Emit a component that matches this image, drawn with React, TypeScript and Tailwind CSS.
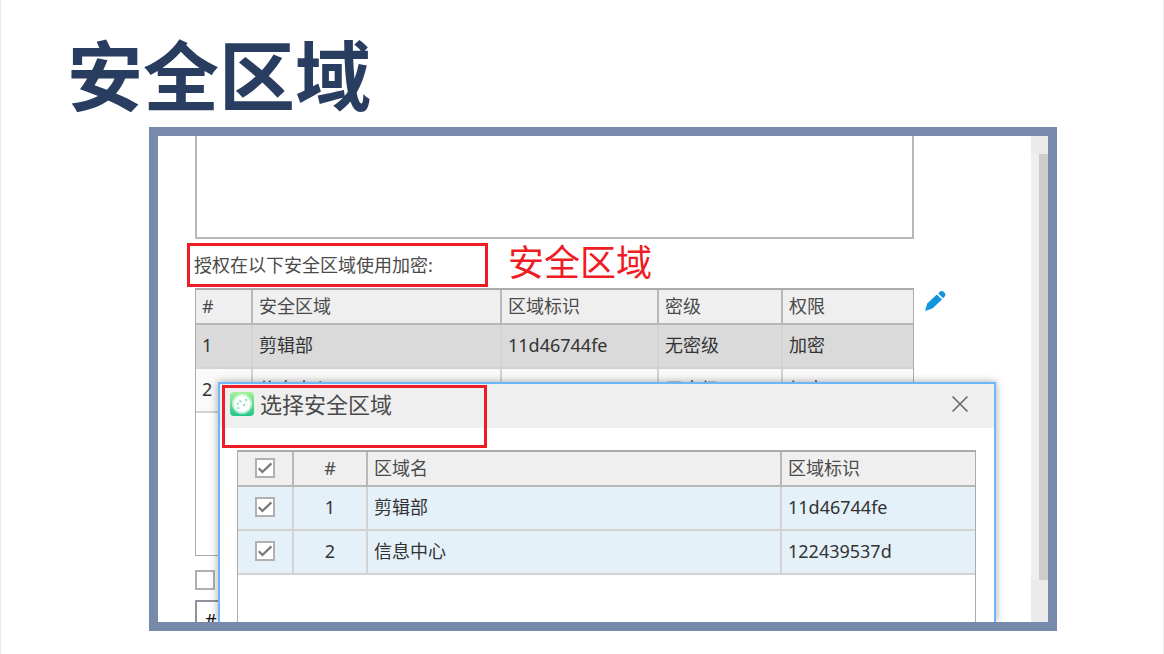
import { useState } from 'react'
import { clsx } from 'clsx'

// ── Types ─────────────────────────────────────────────────────────────────────

interface Zone {
  id: number
  name: string
  code: string
  level: string
  permission: string
}

// ── Data ──────────────────────────────────────────────────────────────────────

const ZONES: Zone[] = [
  { id: 1, name: '剪辑部',   code: '11d46744fe', level: '无密级', permission: '加密' },
  { id: 2, name: '信息中心', code: '122439537d', level: '无密级', permission: '加密' },
]

const HEAD_CELL = 'border-r-2 border-b-2 border-[#b8b8b8] last:border-r-0 px-1.5 pb-0.5 font-normal'
const BODY_CELL = 'border-r-2 border-b-2 border-[#d3d3d3] last:border-r-0 px-1.5 pb-0.5'

// ── Small parts ───────────────────────────────────────────────────────────────

function TickBox({ label, checked, onChange }: {
  label: string
  checked: boolean
  onChange: (value: boolean) => void
}) {
  return (
    <label className="mx-auto grid size-5">
      <input
        type="checkbox"
        aria-label={label}
        checked={checked}
        onChange={e => onChange(e.target.checked)}
        className="col-start-1 row-start-1 size-5 appearance-none border-2 border-[#b0b0b0] bg-white"
      />
      {checked && (
        <svg viewBox="0 0 20 20" className="pointer-events-none col-start-1 row-start-1 size-5" fill="none" stroke="#777" strokeWidth="2.2">
          <path d="M3.8 10.2 L7.4 14 L16.4 5.4" />
        </svg>
      )}
    </label>
  )
}

function PencilIcon() {
  return (
    <svg viewBox="0 0 22 22" className="size-[22px]" fill="#1296db">
      <path d="M1 21 L3.2 13.6 L12.8 4.5 L18 9.5 L8.4 18.6 Z" />
      <path d="M14.2 3.4 L16.2 1.5 Q17.5 0.4 18.9 1.3 L21 3.3 Q22 4.7 21 6.1 L19.2 8.2 Z" />
    </svg>
  )
}

function AppLogo() {
  return (
    <svg viewBox="0 0 24 24" className="size-6 shrink-0">
      <defs>
        <linearGradient id="logo-bg" x1="0" y1="0" x2="0" y2="1">
          <stop offset="0" stopColor="#a5f29a" />
          <stop offset="1" stopColor="#1fc68a" />
        </linearGradient>
        <radialGradient id="logo-disc">
          <stop offset="0.7" stopColor="#fff" />
          <stop offset="1" stopColor="#fff" stopOpacity="0.3" />
        </radialGradient>
      </defs>
      <rect width="24" height="24" rx="4" fill="url(#logo-bg)" />
      <circle cx="12" cy="12" r="10.4" fill="url(#logo-disc)" />
      <g fill="#5fd0a8">
        <circle cx="7.8" cy="11.6" r="0.9" />
        <circle cx="10.2" cy="9.2" r="1" />
        <circle cx="16.2" cy="8" r="0.9" />
        <circle cx="14" cy="13" r="1.1" />
        <circle cx="8.4" cy="16" r="1" />
      </g>
      <path d="M10.2 9.2 L14 13 L16.2 8 M7.8 11.6 L8.4 16" stroke="#b9ecd9" strokeWidth="0.5" fill="none" />
    </svg>
  )
}

function ScrollTrack() {
  return (
    <div className="flex w-[17px] shrink-0 flex-col bg-[#efefef]">
      <div className="h-[18px] bg-[#eaeaea]" />
      <div className="ml-2 flex-1 bg-[#cdcdcd]" />
      <div className="h-[42px] bg-[#eaeaea]" />
    </div>
  )
}

// ── Authorised zones table ────────────────────────────────────────────────────

function ZoneTable() {
  return (
    <div className="h-[268px] flex-1 border border-t-2 border-[#ababab]">
      <table className="w-full table-fixed border-separate border-spacing-0 text-left">
        <colgroup>
          <col className="w-[57px]" />
          <col />
          <col className="w-[157px]" />
          <col className="w-[124px]" />
          <col className="w-[130px]" />
        </colgroup>
        <thead>
          <tr className="h-[35px] bg-[#efefef] text-[#4a4a4a]">
            <th className={HEAD_CELL}>#</th>
            <th className={HEAD_CELL}>安全区域</th>
            <th className={HEAD_CELL}>区域标识</th>
            <th className={HEAD_CELL}>密级</th>
            <th className={HEAD_CELL}>权限</th>
          </tr>
        </thead>
        <tbody>
          {ZONES.map((zone, i) => (
            <tr key={zone.id} className={clsx('h-11', i === 0 ? 'bg-[#dadada]' : 'bg-[#fafafa]')}>
              <td className={BODY_CELL}>{zone.id}</td>
              <td className={BODY_CELL}>{zone.name}</td>
              <td className={BODY_CELL}>{zone.code}</td>
              <td className={BODY_CELL}>{zone.level}</td>
              <td className={BODY_CELL}>{zone.permission}</td>
            </tr>
          ))}
        </tbody>
      </table>
    </div>
  )
}

// ── Zone picker dialog ────────────────────────────────────────────────────────

function ZoneDialog() {
  const [selected, setSelected] = useState<number[]>(ZONES.map(z => z.id))

  const toggle = (id: number, on: boolean) =>
    setSelected(prev => (on ? [...prev, id] : prev.filter(x => x !== id)))

  return (
    <div
      role="dialog"
      aria-labelledby="zone-dialog-title"
      className="absolute top-[246px] right-[52px] bottom-0 left-[60px] flex flex-col border-2 border-b-0 border-[#6db6fb] bg-white shadow-[0_0_8px_rgba(0,0,0,0.35)]"
    >
      <div className="flex h-11 shrink-0 items-center bg-[#efefef] pr-[25px] pb-1 pl-2.5">
        <AppLogo />
        <h2 id="zone-dialog-title" className="ml-1.5 flex-1 text-[22px] leading-8 text-[#4a4a4a]">选择安全区域</h2>
        <button type="button" aria-label="关闭" className="size-[18px]">
          <svg viewBox="0 0 18 18" className="size-[18px]" stroke="#666" strokeWidth="1.5">
            <path d="M1.5 1.5 L16.5 16.5 M16.5 1.5 L1.5 16.5" />
          </svg>
        </button>
      </div>

      <div className="mt-[22px] mr-[18px] ml-[17px] flex-1 border border-t-2 border-b-0 border-[#ababab]">
        <table className="w-full table-fixed border-separate border-spacing-0 text-left">
          <colgroup>
            <col className="w-[56px]" />
            <col className="w-[74px]" />
            <col />
            <col className="w-[193px]" />
          </colgroup>
          <thead>
            <tr className="h-[35px] bg-[#efefef] text-[#4a4a4a]">
              <th className={HEAD_CELL}>
                <TickBox
                  label="全选"
                  checked={selected.length === ZONES.length}
                  onChange={on => setSelected(on ? ZONES.map(z => z.id) : [])}
                />
              </th>
              <th className={clsx(HEAD_CELL, 'text-center')}>#</th>
              <th className={HEAD_CELL}>区域名</th>
              <th className={HEAD_CELL}>区域标识</th>
            </tr>
          </thead>
          <tbody>
            {ZONES.map(zone => (
              <tr key={zone.id} className="h-11 bg-[#e4f1f9]">
                <td className={BODY_CELL}>
                  <TickBox
                    label={zone.name}
                    checked={selected.includes(zone.id)}
                    onChange={on => toggle(zone.id, on)}
                  />
                </td>
                <td className={clsx(BODY_CELL, 'text-center')}>{zone.id}</td>
                <td className={BODY_CELL}>{zone.name}</td>
                <td className={BODY_CELL}>{zone.code}</td>
              </tr>
            ))}
          </tbody>
        </table>
      </div>

      {/* Highlight over the dialog title */}
      <div className="pointer-events-none absolute top-px left-0.5 h-[63px] w-[265px] border-3 border-[#ee1c25]" />
    </div>
  )
}

// ── App ───────────────────────────────────────────────────────────────────────

export default function App() {
  const [note, setNote] = useState('')
  const [extra, setExtra] = useState(false)

  return (
    <main className="flex h-screen flex-col border-x border-[#e9ecf2] bg-white pr-[106px] pb-[23px] pl-[148px] font-['Noto_Sans','Noto_Sans_CJK_SC',sans-serif] text-lg leading-6 text-[#333]">
      <h1 className="-ml-[82px] h-[127px] shrink-0 pt-[22px] font-['Noto_Sans_CJK_SC',sans-serif] text-[76px] leading-[100px] font-bold text-[#293d60]">
        安全区域
      </h1>

      <section className="relative flex min-h-0 flex-1 overflow-hidden border-9 border-[#788aac]">
        <div className="flex min-w-0 flex-1 flex-col pl-[37px]">
          <textarea
            aria-label="备注"
            value={note}
            onChange={e => setNote(e.target.value)}
            className="mr-[117px] h-[103px] shrink-0 resize-none border-2 border-t-0 border-[#b8b8b8] outline-none"
          />

          <div className="mt-1 flex h-[45px] shrink-0 items-start">
            <p className="-ml-2 flex h-11 w-[301px] items-center border-3 border-[#ee1c25] pl-1 text-[#4a4a4a]">
              授权在以下安全区域使用加密:
            </p>
            <span className="ml-5 text-4xl leading-10 text-[#ee1c25]">安全区域</span>
          </div>

          <div className="flex shrink-0 items-start pr-[85px]">
            <ZoneTable />
            <button type="button" aria-label="编辑" className="mt-0.5 ml-2.5 size-[22px]">
              <PencilIcon />
            </button>
          </div>

          <div className="mt-3.5 flex shrink-0 justify-start">
            <div>
              <TickBox label="附加" checked={extra} onChange={setExtra} />
            </div>
          </div>

          <div className="mt-2.5 mr-[117px] h-20 shrink-0 border-2 border-[#8f949c] px-2 pt-1.5 text-[#111]">#</div>
        </div>

        <ScrollTrack />
        <ZoneDialog />
      </section>
    </main>
  )
}
